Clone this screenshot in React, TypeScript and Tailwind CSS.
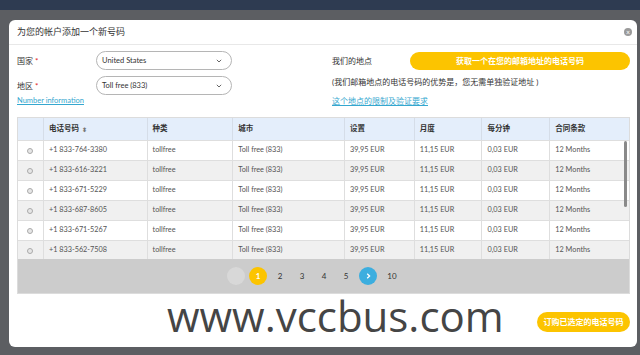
import React from "react";

const rows = [
  "+1 833-764-3380",
  "+1 833-616-3221",
  "+1 833-671-5229",
  "+1 833-687-8605",
  "+1 833-671-5267",
  "+1 833-562-7508",
];

const cols = [
  { label: "", w: "w-[26px]" },
  { label: "电话号码", w: "w-[104px]" },
  { label: "种类", w: "w-[86px]" },
  { label: "城市", w: "w-[112px]" },
  { label: "设置", w: "w-[70px]" },
  { label: "月度", w: "w-[68px]" },
  { label: "每分钟", w: "w-[68px]" },
  { label: "合同条款", w: "w-[79px]" },
];

function Select({ value }: { value: string }) {
  return (
    <div className="flex h-[19px] w-[136px] items-center justify-between rounded-full border border-[#b5b5b5] pl-[5px] pr-[9px] text-[7.5px] text-[#333]">
      <span>{value}</span>
      <svg width="6" height="4" viewBox="0 0 6 4">
        <path d="M0.8 0.8 L3 3 L5.2 0.8" fill="none" stroke="#666" strokeWidth="1" />
      </svg>
    </div>
  );
}

export default function App() {
  return (
    <div
      className="relative h-[355px] w-[640px] overflow-hidden bg-[#5c5e62]"
      style={{ fontFamily: "Lato, 'Noto Sans CJK SC', sans-serif" }}
    >
      <div className="h-[10px] bg-[#2e3b51]" />
      <div className="ml-[9px] mt-[10px] h-[327px] w-[628px] rounded-[6px] bg-white">
        {/* header */}
        <div className="flex h-[25px] items-center justify-between border-b border-[#e8e8e8] pl-[8px] pr-[5px]">
          <span className="text-[9px] text-[#333]">为您的帐户添加一个新号码</span>
          <span className="flex h-[8px] w-[8px] items-center justify-center rounded-full bg-[#9a9a9a] text-[7px] leading-none text-white">
            ×
          </span>
        </div>

        {/* body */}
        <div className="pl-[8px] pr-[7px] pt-[6px]">
          <div className="flex">
            <div className="w-[315px]">
              <div className="flex h-[19px] items-center">
                <span className="w-[79px] text-[8px] text-[#333]">
                  国家 <span className="text-[#e02424]">*</span>
                </span>
                <Select value="United States" />
              </div>
              <div className="mt-[6px] flex h-[19px] items-center">
                <span className="w-[79px] text-[8px] text-[#333]">
                  地区 <span className="text-[#e02424]">*</span>
                </span>
                <Select value="Toll free (833)" />
              </div>
              <div className="text-[7.5px] leading-[11px] text-[#35a7cf] underline">Number information</div>
            </div>
            <div className="flex-1">
              <div className="flex h-[19px] items-center">
                <span className="w-[78px] text-[8px] text-[#333]">我们的地点</span>
                <div className="flex h-[18px] flex-1 items-center justify-center rounded-full bg-[#fcc400] text-[8px] font-bold text-white">
                  获取一个在您的邮箱地址的电话号码
                </div>
              </div>
              <div className="mt-[4px] text-[8px] leading-[16px] text-[#333]">
                (我们邮箱地点的电话号码的优势是，您无需单独验证地址 )
              </div>
              <div className="mt-[5px] text-[8px] leading-[12px] text-[#35a7cf] underline">这个地点的限制及验证要求</div>
            </div>
          </div>

          {/* table */}
          <div className="relative mt-[10px] w-[613px] border border-[#dcdcdc]">
            <div className="flex h-[22px] bg-[#e4eefb]">
              {cols.map((c, i) => (
                <div
                  key={i}
                  className={`${c.w} flex items-center border-r border-[#d5dde8] pl-[5px] text-[7.5px] font-semibold text-[#333] last:border-r-0`}
                >
                  {c.label}
                  {i === 1 && <span className="ml-[3px] text-[6px] text-[#777]">⬍</span>}
                </div>
              ))}
            </div>
            <div className="h-[119px] overflow-hidden">
              {rows.map((r, i) => (
                <div
                  key={r}
                  className={`flex h-[20px] border-t border-[#dedede] text-[7.3px] text-[#555] ${i % 2 ? "bg-[#f0f0f0]" : "bg-white"}`}
                >
                  <div className="flex w-[26px] items-center justify-center border-r border-[#dedede]">
                    <span className="h-[6px] w-[6px] rounded-full border border-[#aaa] bg-[#e6e6e6]" />
                  </div>
                  <div className="flex w-[104px] items-center border-r border-[#dedede] pl-[5px]">{r}</div>
                  <div className="flex w-[86px] items-center border-r border-[#dedede] pl-[5px]">tollfree</div>
                  <div className="flex w-[112px] items-center border-r border-[#dedede] pl-[5px]">Toll free (833)</div>
                  <div className="flex w-[70px] items-center border-r border-[#dedede] pl-[5px]">39,95 EUR</div>
                  <div className="flex w-[68px] items-center border-r border-[#dedede] pl-[5px]">11,15 EUR</div>
                  <div className="flex w-[68px] items-center border-r border-[#dedede] pl-[5px]">0,03 EUR</div>
                  <div className="flex w-[79px] items-center pl-[5px]">12 Months</div>
                </div>
              ))}
            </div>
            <div className="absolute right-[2px] top-[23px] h-[66px] w-[3px] rounded-full bg-[#8a8a8a]" />
            <div className="flex h-[34px] items-center bg-[#cccccc] pl-[207px] text-[8px] text-[#333]">
              <span className="flex w-[22px] justify-center">
                <span className="h-[18px] w-[18px] rounded-full bg-[#d8d8d8]" />
              </span>
              <span className="flex w-[22px] justify-center">
                <span className="flex h-[18px] w-[18px] items-center justify-center rounded-full bg-[#fcc400] font-bold text-white">1</span>
              </span>
              {["2", "3", "4", "5"].map((n) => (
                <span key={n} className="flex w-[22px] justify-center">{n}</span>
              ))}
              <span className="flex w-[22px] justify-center">
                <span className="flex h-[18px] w-[18px] items-center justify-center rounded-full bg-[#3caedf]">
                  <svg width="5" height="6" viewBox="0 0 5 6">
                    <path d="M1.2 0.8 L3.6 3 L1.2 5.2" fill="none" stroke="white" strokeWidth="1.3" />
                  </svg>
                </span>
              </span>
              <span className="flex w-[26px] justify-center">10</span>
            </div>
          </div>

          <div className="mt-[18px] flex justify-end">
            <div className="flex h-[20px] w-[93px] items-center justify-center rounded-full bg-[#fcc400] text-[8px] font-bold text-white">
              订购已选定的电话号码
            </div>
          </div>
        </div>
      </div>

      <div
        className="absolute left-[167px] top-[295px] text-[42px] leading-none text-[#454545]"
        style={{ fontFamily: "'Open Sans', sans-serif" }}
      >
        www.vccbus.com
      </div>
    </div>
  );
}
